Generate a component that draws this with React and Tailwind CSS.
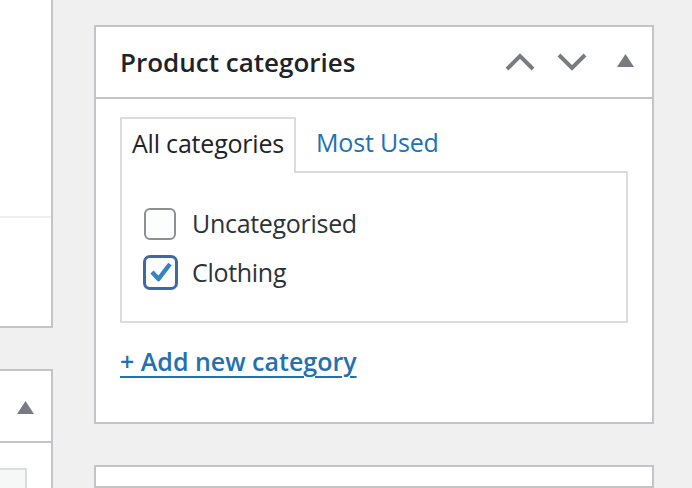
const font = { fontFamily: '"Open Sans", "Noto Sans", sans-serif' };

const ChevronUp = () => (
  <svg width="30" height="18" viewBox="0 0 30 18" className="text-[#787c82]">
    <path d="M2 16 L15 3 L28 16" fill="none" stroke="currentColor" strokeWidth="4" />
  </svg>
);

const ChevronDown = () => (
  <svg width="30" height="18" viewBox="0 0 30 18" className="text-[#787c82]">
    <path d="M2 2 L15 15 L28 2" fill="none" stroke="currentColor" strokeWidth="4" />
  </svg>
);

const Triangle = () => (
  <svg width="17" height="13" viewBox="0 0 17 13" className="text-[#787c82]">
    <path d="M8.5 0 L17 13 L0 13 Z" fill="currentColor" />
  </svg>
);

const Checkbox = ({ checked }) =>
  checked ? (
    <span className="w-[35px] h-[35px] rounded-[7px] border-[3px] border-[#3e6aa0] bg-white flex items-center justify-center shrink-0">
      <svg width="24" height="22" viewBox="0 0 24 22">
        <path d="M3 11 L9.5 18 L21 3" fill="none" stroke="#3582c4" strokeWidth="4.5" strokeLinejoin="round" />
      </svg>
    </span>
  ) : (
    <span className="w-[32px] h-[32px] rounded-[6px] border-2 border-[#8c8f94] bg-[#fdfdfd] shrink-0" />
  );

export default function App() {
  return (
    <div className="w-[692px] h-[488px] bg-[#f0f0f1] overflow-hidden flex" style={font}>
      {/* Left column */}
      <div className="w-[53px] flex flex-col shrink-0">
        <div className="h-[328px] shrink-0 bg-white border-r-2 border-b-2 border-[#c3c4c7] flex flex-col">
          <div className="h-[218px] border-b-2 border-[#f0f0f1]" />
        </div>
        <div className="mt-[41px] shrink-0 h-[160px] bg-white border-t-2 border-r-2 border-[#c3c4c7] flex flex-col">
          <div className="h-[72px] border-b-2 border-[#c3c4c7] flex items-center pl-[17px] pt-[3px]">
            <Triangle />
          </div>
          <div className="mt-[25px] w-[27px] h-[30px] border-t-2 border-r-2 border-[#dcdcde] bg-[#f6f7f7]" />
        </div>
      </div>

      {/* Main column */}
      <div className="ml-[41px] w-[560px] shrink-0 flex flex-col pt-[25px]">
        <div className="h-[399px] shrink-0 bg-white border-2 border-[#c3c4c7] flex flex-col">
          <div className="h-[72px] border-b-2 border-[#c3c4c7] flex items-center pl-[24px] pr-[18px]">
            <h2 className="text-[26px] font-semibold text-[#1d2327] flex-1 leading-none">
              Product categories
            </h2>
            <div className="flex items-center gap-[22px] pl-2">
              <ChevronUp />
              <ChevronDown />
              <span className="ml-[8px] -mt-[4px]"><Triangle /></span>
            </div>
          </div>

          <div className="px-[24px] pt-[18px]">
            <div className="flex items-end relative z-10">
              <div className="h-[56px] px-[10px] pb-[4px] border-2 border-b-0 border-[#dcdcde] bg-white flex items-center text-[25px] text-[#1d2327] tracking-[-0.2px]">
                All categories
              </div>
              <div className="h-[56px] px-[20px] pb-[4px] flex items-center text-[25px] text-[#2271b1] tracking-[-0.2px]">
                Most Used
              </div>
            </div>
            <div className="-mt-[2px] h-[152px] w-[508px] border-2 border-[#dcdcde] pt-[32px] pl-[22px] flex flex-col gap-[11px]">
              <label className="flex items-center gap-[16px] text-[25px] text-[#2c3338] tracking-[-0.3px]">
                <Checkbox />
                Uncategorised
              </label>
              <label className="flex items-center gap-[14px] -ml-[1px] text-[25px] text-[#2c3338] tracking-[-0.3px]">
                <Checkbox checked />
                Clothing
              </label>
            </div>
            <a className="inline-block mt-[20px] text-[25px] font-semibold text-[#2271b1] underline underline-offset-[5px] decoration-2">
              + Add new category
            </a>
          </div>
        </div>
        <div className="mt-[41px] flex-1 bg-white border-2 border-[#c3c4c7]" />
      </div>
    </div>
  );
}
